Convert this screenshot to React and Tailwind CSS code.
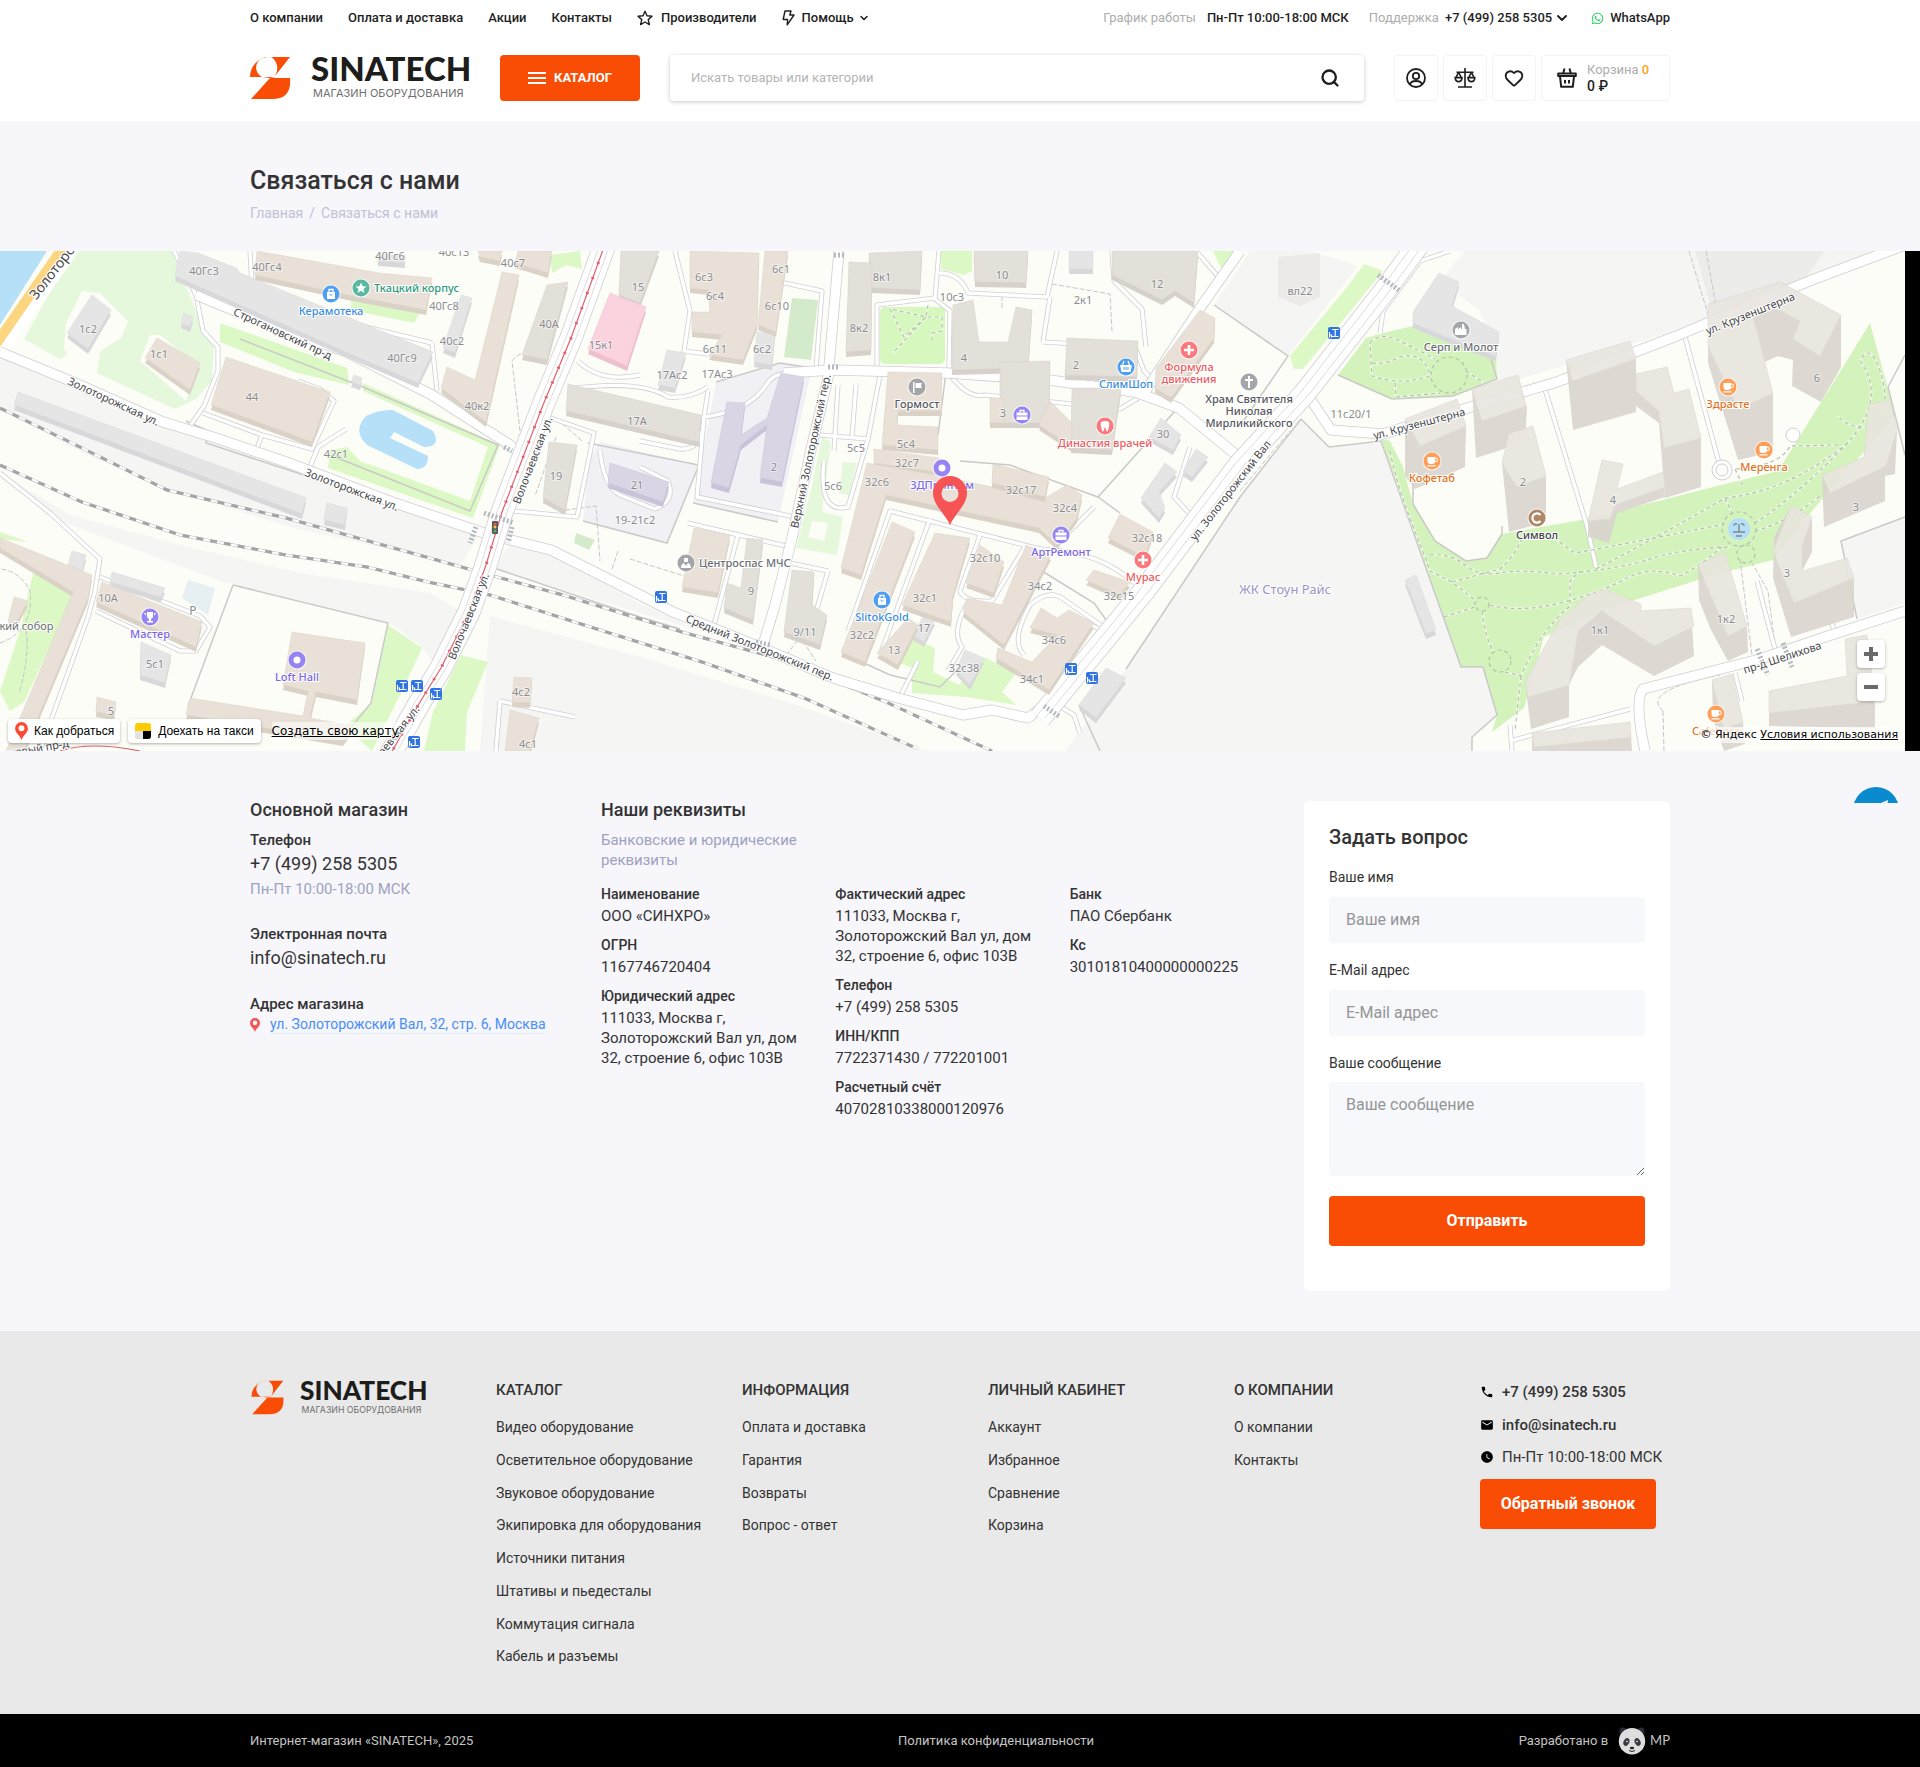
import React, { useState } from "react";
import { ChevronDown, Search, Heart, Plus, Minus } from "lucide-react";
import { FaWhatsapp } from "react-icons/fa";
import { MdPhone, MdEmail, MdWatchLater } from "react-icons/md";

const footerColumns = [
  {
    title: "КАТАЛОГ",
    links: [
      "Видео оборудование",
      "Осветительное оборудование",
      "Звуковое оборудование",
      "Экипировка для оборудования",
      "Источники питания",
      "Штативы и пьедесталы",
      "Коммутация сигнала",
      "Кабель и разъемы",
    ],
  },
  {
    title: "ИНФОРМАЦИЯ",
    links: ["Оплата и доставка", "Гарантия", "Возвраты", "Вопрос - ответ"],
  },
  {
    title: "ЛИЧНЫЙ КАБИНЕТ",
    links: ["Аккаунт", "Избранное", "Сравнение", "Корзина"],
  },
  { title: "О КОМПАНИИ", links: ["О компании", "Контакты"] },
];

const requisites = [
  [
    ["Наименование", "ООО «СИНХРО»"],
    ["ОГРН", "1167746720404"],
    ["Юридический адрес", "111033, Москва г, Золоторожский Вал ул, дом 32, строение 6, офис 103В"],
  ],
  [
    ["Фактический адрес", "111033, Москва г, Золоторожский Вал ул, дом 32, строение 6, офис 103В"],
    ["Телефон", "+7 (499) 258 5305"],
    ["ИНН/КПП", "7722371430 / 772201001"],
    ["Расчетный счёт", "40702810338000120976"],
  ],
  [
    ["Банк", "ПАО Сбербанк"],
    ["Кс", "30101810400000000225"],
  ],
];

// ---------- map data, in a 1905 x 500 space ----------

const grayZones = [
  "0,104 167,176 481,281 461,314 294,277 163,237 73,197 0,157",
  "0,227 60,270 100,285 220,330 388,371 420,394 440,420 464,362 430,342 300,322 180,294 70,264 0,222",
  "490,365 640,406 800,455 925,500 480,500",
  "512,290 560,308 640,352 700,380 640,362 494,318",
  "1465,0 1905,0 1674,80 1520,128 1497,128 1496,101 1480,60 1440,30",
  "1240,246 1301,168 1329,196 1381,190 1461,416 1483,416 1497,464 1472,486 1472,500 1065,500 1126,418",
  "1214,54 1288,105 1358,15 1310,0 1250,0",
  "1841,290 1905,266 1905,352 1857,368",
];

const lots = [
  "716,131 780,112 812,117 778,271 693,252",
  "600,191 699,214 667,292 583,270 588,210",
];

const lightGreens = [
  "73,0 172,0 196,60 214,96 212,130 196,148 175,158 97,122 103,80 60,108 24,88",
  "822,186 831,191 822,261 843,266 837,304 796,297 812,234",
  "843,211 857,212 849,244 839,242",
];

const yards = [
  "82,40 100,42 128,70 122,86 104,98 78,118 64,98 66,72",
  "150,84 160,84 200,116 186,150 140,110",
  "812,270 828,272 824,290 808,286",
];

const greens = [
  "220,72 347,117 349,134 294,121 220,91",
  "363,132 500,194 473,267 328,217 330,200 347,196 360,210 470,250 488,196 363,140",
  "351,49 420,62 414,72 351,59",
  "388,374 422,397 402,440 372,500 345,475 372,452",
  "461,404 488,411 467,461 465,500 424,500 433,461",
  "33,322 75,341 24,451 10,460 0,440 20,380",
  "0,281 28,291 0,288",
  "941,0 972,0 972,20 964,24 941,18",
  "912,387 935,397 933,421 959,434 984,406 1016,422 1002,441 1016,454 967,446 912,442 912,417 900,412",
  "550,4 580,0 582,18 566,14 552,22",
  "1213,0 1238,0 1223,21",
  "1364,13 1383,20 1303,118 1294,118 1290,105 1348,35",
];

const parks = [
  "1338,124 1366,87 1387,81 1413,75 1496,101 1497,127 1453,145 1392,148",
  "1381,188 1390,190 1403,216 1413,253 1435,290 1466,310 1487,307 1502,283 1587,268 1717,235 1778,220 1838,124 1870,72 1895,164 1864,201 1821,249 1773,309 1717,323 1622,353 1544,386 1524,457 1492,481 1497,464 1483,416 1461,416",
];

const beige = [
  "157,87 200,112 190,139 145,107",
  "226,106 330,141 312,191 211,154",
  "257,0 379,22 432,27 426,59 347,44 255,24",
  "502,21 519,24 486,171 441,137 447,116 475,129",
  "292,381 365,392 357,449 316,441 310,467 354,475 343,490 186,464 190,447 303,465 308,440 283,434",
  "102,331 202,371 196,396 96,351",
  "97,446 116,451 114,464 96,461",
  "0,287 92,324 88,347 24,500 6,500 73,341 0,297",
  "514,426 532,427 530,452 512,451",
  "510,459 539,467 530,500 505,500",
  "14,346 28,350 14,376 8,370",
  "518,0 552,0 548,22 515,12",
  "478,0 502,0 500,10 480,6",
  "690,0 759,2 757,74 743,109 709,104 722,84 692,81 692,61 710,61 709,39 690,37",
  "765,0 788,0 776,81 758,74",
  "888,121 942,122 941,141 942,160 898,160 897,174 938,176 938,199 882,194",
  "874,198 939,207 937,221 874,212",
  "867,212 935,224 1045,247 1067,234 1082,244 1077,267 1057,294 1039,277 886,244 861,324 841,317",
  "993,213 1049,226 1045,246 992,232",
  "935,282 970,287 953,344 951,371 902,354",
  "892,271 915,281 865,411 841,401",
  "908,367 918,374 898,414 877,402",
  "980,294 1004,311 994,342 966,332",
  "1026,294 1051,304 1004,394 963,361 967,347 1002,354",
  "1041,357 1057,367 1069,359 1094,372 1049,439 996,407 998,397 1032,411 1057,384 1030,377",
  "1120,263 1153,281 1145,306 1108,287",
  "1094,319 1130,331 1120,344 1086,329",
  "1039,174 1050,150 1072,172 1072,196",
  "1200,59 1215,67 1214,87 1171,147 1155,137 1156,117",
  "694,277 730,284 718,342 682,336",
  "990,147 1004,147 1004,172 990,172",
];

const stone = [
  "869,2 922,0 920,39 871,37",
  "849,11 872,12 871,99 846,101",
  "974,0 1028,0 1026,32 975,31",
  "1112,0 1198,0 1194,52 1175,40 1162,49 1112,24",
  "953,54 973,49 979,91 1008,91 1016,56 1032,59 1028,117 952,119",
  "1000,111 1050,110 1049,172 1000,172",
  "1072,137 1121,137 1112,199 1071,197",
  "1067,87 1138,90 1137,126 1065,124",
  "747,287 763,289 753,369 724,357 727,332 741,337",
  "792,319 814,321 812,354 827,364 820,394 784,381",
  "621,0 659,0 640,52 619,44",
  "568,133 701,164 699,191 566,160",
  "549,191 577,194 565,259 543,247",
  "547,34 568,31 547,109 522,104",
];

const grayHouses = [
  "92,44 111,59 88,98 67,82",
  "180,0 198,2 236,17 240,22 433,101 418,132 339,98 175,25",
  "378,4 405,4 405,12 378,10",
  "461,44 472,47 455,102 443,97",
  "18,141 306,247 302,263 14,154",
  "327,252 347,257 345,274 324,269",
  "112,321 165,337 161,346 110,331",
  "141,391 171,404 165,432 140,424",
  "72,300 86,304 82,320 68,314",
  "184,62 193,66 190,76 181,72",
  "354,124 362,127 360,134 351,131",
  "757,81 775,81 772,114 754,111",
  "667,99 686,102 675,137 658,134",
  "1069,0 1093,0 1093,18 1069,18",
  "924,364 935,369 924,391 913,384",
  "965,399 984,407 970,434 956,419",
  "1161,167 1181,184 1173,199 1149,186",
  "1165,212 1177,221 1159,241 1165,257 1159,267 1141,247",
  "1196,198 1208,206 1192,226 1183,220",
  "1126,427 1096,467 1079,454 1106,417",
  "1413,61 1439,22 1459,31 1452,55 1499,81 1496,105 1465,94 1413,72",
  "1405,329 1416,324 1436,379 1426,383",
];

const purpleHouses = [
  "781,122 804,126 782,231 760,227 767,174 741,194 729,237 711,232 727,151 745,152 741,184 767,167",
  "610,212 669,231 663,251 608,232",
];

// tall blocks: [outline, roof]
const towers = [
  ["1405,168 1457,148 1466,175 1465,216 1415,238 1405,225", "1405,168 1457,148 1466,175 1420,195"],
  ["1472,138 1518,124 1527,157 1525,190 1504,198 1476,207", "1472,138 1518,124 1526,155 1482,170"],
  ["1502,212 1509,183 1533,175 1546,225 1546,271 1509,281", "1502,212 1509,183 1533,175 1546,225 1517,236"],
  ["1566,109 1630,90 1636,109 1636,161 1573,179", "1566,109 1630,90 1636,108 1573,130"],
  ["1636,123 1667,116 1674,142 1689,138 1701,187 1701,236 1665,247 1659,172 1636,155", "1636,123 1667,116 1674,142 1689,138 1701,187 1664,197 1659,160 1636,140"],
  ["1602,209 1623,213 1617,238 1663,221 1665,246 1617,262 1609,292 1588,286 1588,270", "1602,209 1623,213 1617,238 1663,221 1665,236 1615,254 1610,268 1588,270"],
  ["1708,53 1780,31 1841,64 1841,116 1821,151 1792,135 1793,109 1778,105 1758,114 1773,142 1773,201 1738,209 1708,112", "1708,53 1780,31 1841,64 1820,105 1793,88 1800,70 1778,58 1752,62 1773,142 1738,158 1708,95"],
  ["1869,153 1890,149 1897,179 1895,223 1885,225 1885,250 1824,276 1822,224 1864,206", "1869,153 1890,149 1897,179 1886,215 1830,242 1822,224 1864,206"],
  ["1791,255 1812,266 1812,301 1802,320 1815,320 1847,307 1854,327 1854,366 1791,386 1773,327 1774,286", "1791,255 1812,266 1802,295 1802,320 1847,307 1854,327 1794,352 1773,300"],
  ["1698,314 1725,301 1747,375 1748,401 1728,410 1711,379 1699,349", "1698,314 1725,301 1747,375 1728,385 1711,345"],
  ["1604,338 1641,353 1641,360 1691,357 1694,405 1654,425 1602,394 1578,416 1569,434 1569,466 1531,478 1525,431 1559,370 1587,345", "1604,338 1641,353 1641,360 1691,357 1694,375 1654,395 1602,360 1578,380 1569,434 1528,446 1525,431 1559,370 1587,345"],
  ["1769,440 1847,425 1845,388 1867,384 1875,453 1875,477 1769,475", "1769,440 1847,425 1845,388 1867,384 1875,450 1769,462"],
  ["1712,429 1732,423 1743,471 1745,493 1724,500 1713,468", "1712,429 1732,423 1743,471 1724,478"],
  ["1532,482 1630,471 1632,500 1532,500", "1532,482 1630,471 1631,486 1534,496"],
];

const minorRoads = [
  "M174,0 L196,44 L203,80 L218,96 L218,120 L204,155 L190,175",
  "M250,0 L252,36 L300,60 L432,92",
  "M432,92 L437,140",
  "M0,222 L50,262 L100,308 L95,340 L88,366 L40,500",
  "M96,360 L180,400 L196,400 L210,376 L200,365 L100,326",
  "M203,162 L262,184 L312,198 L334,150 L320,138 L298,130",
  "M262,184 L256,200",
  "M318,196 L310,216",
  "M318,196 L346,178",
  "M548,166 L594,182 L577,266 L514,260",
  "M578,110 Q600,132 640,124",
  "M568,138 Q640,128 668,146 Q690,148 708,136",
  "M640,190 L680,198 Q700,200 704,172",
  "M600,200 Q604,236 620,244 L655,258 Q676,250 668,230 L640,216",
  "M704,166 L697,246 L795,266",
  "M708,140 L704,166 Q750,160 766,134 Q776,118 800,124",
  "M675,0 L690,60 L684,100 L716,104",
  "M780,31 L822,40 L816,118",
  "M820,184 L868,188 L880,124",
  "M838,134 L834,200",
  "M856,134 L852,186",
  "M868,188 L848,256 Q818,264 824,210",
  "M688,272 L790,296",
  "M738,284 L714,374",
  "M790,312 L828,320",
  "M828,320 L815,364",
  "M848,380 L890,260 L1040,298",
  "M930,268 L880,404",
  "M980,284 L960,340 Q965,352 992,350 L1026,294",
  "M970,348 Q950,380 962,396 L948,420",
  "M1040,298 Q1100,300 1134,332",
  "M1058,292 L1094,256",
  "M877,117 L877,54 L935,47 L939,0",
  "M949,117 L950,60 L935,48",
  "M939,22 Q960,22 968,42 L1047,46 L1057,0",
  "M1043,91 L1050,46",
  "M1043,91 L1135,96 L1144,120 L1156,132",
  "M950,124 Q968,148 985,144 L1120,158 L1140,146",
  "M1112,0 L1114,30 L1142,58 L1146,96",
  "M1196,0 L1222,30",
  "M1190,196 L1174,246 L1196,270",
  "M1048,448 L1074,464 L1080,482",
  "M1080,370 L1110,382",
  "M1024,404 Q1010,390 1030,354 Q1050,336 1066,350 L1112,382",
  "M900,446 L918,410",
  "M500,450 L575,466",
  "M500,450 L496,500",
  "M1544,135 L1587,275 L1596,316",
  "M1685,86 L1719,212",
  "M1380,82 L1383,60 L1420,10 L1450,0",
  "M1630,458 L1510,490",
  "M1510,474 L1512,500",
  "M1735,422 L1742,450",
  "M1757,330 L1776,402",
  "M1835,384 L1832,372",
];

const mainRoads = [
  "M0,101 L73,131 L163,171 L216,187 L286,211 L392,251 L490,284 L551,299 L640,344 L673,361 L755,394 L833,427 L898,447 L963,464 L992,459 L1028,467 L1049,451",
  "M196,44 L245,64 L347,101 L432,144 L510,194 L526,207",
  "M839,0 L828,127 L812,194 L792,287 L775,354 L763,394",
  "M784,122 L833,119 L947,122 L1049,129 L1135,141 L1179,157 L1240,207",
  "M1143,144 L1200,57 L1240,0",
  "M1309,146 L1331,179 L1383,183 L1457,160 L1557,131 L1674,86 L1760,50 L1817,27 L1905,-6",
  "M1905,360 L1825,386 L1760,408 L1643,438 Q1634,450 1645,500",
];

const avenues = [
  "M604,-4 L571,87 L543,154 L502,261 L486,314 L469,361 L441,417 L420,451 L390,504",
  "M1040,467 L1143,341 L1240,213 L1305,142 L1383,42 L1418,-6",
];

const fences = [
  "M233,334 L388,372 L371,452 L350,478",
  "M233,334 L188,455",
  "M240,88 L363,136 L498,194 L470,260 L335,206",
  "M716,131 L780,112 L812,117 M693,252 L778,271 M588,192 L699,214 L667,292 L583,270",
  "M946,121 L938,184 M1175,160 L1098,246 L1010,214 L960,210",
  "M1098,246 L1120,262 M1042,320 L1094,352 L1114,380 M864,412 L890,424 L940,436 L956,420",
  "M1214,54 L1288,105 L1240,175 M1301,168 L1329,196 L1381,190 L1461,416 L1483,416 L1497,464 L1472,486 L1472,500",
  "M1338,124 L1392,148 L1453,145 L1497,128 L1490,104",
  "M1413,220 L1413,253 L1435,290 L1466,310 L1487,307 L1502,283 L1502,275",
  "M1126,418 L1240,246 L1301,168 M1079,454 L1100,500",
  "M1857,368 L1841,290 L1905,266 M1888,136 L1905,104 M1888,136 L1905,204",
  "M186,170 L208,180 L206,192 L310,226",
  "M497,318 L640,366 L680,378",
];

const parkPaths = [
  "M1390,200 C1400,250 1420,290 1430,320 L1452,331 L1476,350",
  "M1444,366 L1475,356",
  "M1490,354 Q1520,362 1560,352 T1625,328 T1680,325 Q1700,315 1722,296",
  "M1430,304 Q1450,302 1465,314 T1500,322 T1560,323 Q1620,318 1650,308 T1730,296",
  "M1452,331 L1500,318 Q1515,305 1523,285",
  "M1554,287 L1575,302 Q1640,290 1725,273",
  "M1596,318 Q1660,285 1725,247 Q1790,240 1850,190",
  "M1755,272 Q1790,250 1840,200 T1860,110 Q1870,90 1880,120 T1880,175 Q1850,180 1838,165",
  "M1755,280 Q1790,270 1820,245",
  "M1725,247 L1732,262",
  "M1735,218 L1743,235",
  "M1838,194 L1790,195 Q1780,215 1735,218",
  "M1482,360 Q1485,385 1493,400",
  "M1505,421 L1521,425 Q1540,380 1570,355 L1570,330 L1580,320",
  "M1521,425 L1515,480",
  "M1370,92 Q1380,80 1400,90 T1435,108",
  "M1372,112 Q1385,114 1400,106 Q1425,100 1430,125 Q1400,135 1372,125 L1370,92",
  "M1395,132 L1396,146 Q1420,144 1440,142",
  "M1466,120 L1484,132",
  "M890,58 L904,86 L926,66 L890,58 M926,66 L893,102 M928,54 L926,66 L942,66 L942,80 L932,82 L932,90",
];

const thinPaths = [
  "M520,180 L512,110 Q522,98 530,104",
  "M582,190 Q560,170 552,166 M556,186 L535,245 M558,260 L596,255 L600,310",
  "M1052,33 L1110,43 L1112,80 M1002,45 L1002,58",
  "M630,308 L700,330 M618,300 L612,318",
  "M1689,0 L1710,70 M1706,0 L1716,54",
  "M1776,402 L1768,340 L1752,312 M1740,308 L1752,404",
  "M1240,240 L1290,180 M1060,440 L1150,322",
  "M1663,460 Q1640,440 1720,424 M1663,460 L1664,500",
  "M782,410 L800,386 L816,410",
  "M0,392 Q34,380 30,340 Q20,320 0,318",
  "M20,440 Q30,400 26,380",
];

const houseNumbers = [
  ["40Гс3", 204, 20], ["40Гс4", 267, 16], ["40Гс6", 390, 5], ["40с13", 454, 1], ["40с7", 513, 12],
  ["40Гс8", 444, 55], ["40с2", 452, 90], ["40А", 549, 73], ["1с2", 88, 78], ["1с1", 159, 103],
  ["44", 252, 146], ["40Гс9", 402, 107], ["40к2", 477, 155], ["42с1", 336, 203], ["19", 556, 225],
  ["15к1", 601, 94], ["10А", 108, 347], ["5с1", 155, 413], ["5", 111, 460], ["4с2", 521, 441],
  ["4с1", 528, 493], ["15", 638, 36], ["6с3", 704, 26], ["6с1", 781, 18], ["6с4", 715, 45],
  ["6с10", 777, 55], ["6с11", 715, 98], ["6с2", 762, 98], ["17Ас2", 672, 124], ["17Ас3", 717, 123],
  ["17А", 637, 170], ["21", 637, 234], ["19-21с2", 635, 269], ["2", 774, 216], ["8к1", 882, 26],
  ["8к2", 859, 77], ["10", 1002, 24], ["10с3", 952, 46], ["2к1", 1083, 49], ["12", 1157, 33],
  ["4", 964, 107], ["2", 1076, 114], ["3", 1003, 162], ["5с4", 906, 193], ["5с5", 856, 197],
  ["32с7", 907, 212], ["5с6", 833, 235], ["32с6", 877, 231], ["32с17", 1021, 239], ["32с4", 1065, 257],
  ["30", 1163, 183], ["32с18", 1147, 287], ["32с10", 985, 307], ["34с2", 1040, 335], ["32с15", 1119, 345],
  ["32с1", 925, 347], ["17", 924, 377], ["32с2", 862, 384], ["13", 894, 399], ["34с6", 1054, 389],
  ["32с38", 964, 417], ["34с1", 1032, 428], ["9", 751, 340], ["9/11", 805, 381], ["вл22", 1300, 40],
  ["11с20/1", 1351, 163], ["2", 1523, 231], ["4", 1613, 249], ["6", 1817, 127], ["3", 1856, 256],
  ["3", 1787, 322], ["1к2", 1726, 368], ["1к1", 1600, 379],
];

// [text, centre x, centre y, angle]
const streets = [
  ["Строгановский пр-д", 283, 82, 25],
  ["Золоторожская ул.", 114, 150, 25],
  ["Золоторожская ул.", 352, 238, 21],
  ["Волочаевская ул.", 532, 209, -69],
  ["Волочаевская ул.", 468, 365, -68],
  ["Волочаевская ул.", 388, 492, -52],
  ["Верхний Золоторожский пер.", 810, 200, -78],
  ["Средний Золоторожский пер.", 760, 396, 22],
  ["ул. Золоторожский Вал", 1230, 239, -52],
  ["ул. Крузенштерна", 1419, 172, -15],
  ["ул. Крузенштерна", 1750, 62, -22],
  ["пр-д Шелихова", 1782, 406, -18],
  ["Танковый пр-д", 30, 498, -10],
];

const BLUE = "#4f9ff0";
const RED = "#f9797d";
const PURPLE = "#9683f4";
const GRAY = "#a3a5a9";
const ORANGE = "#ff9f57";

const places = [
  { x: 331, y: 43, fill: BLUE, ink: "#3a8de0", icon: "bag", lines: ["Керамотека"] },
  { x: 361, y: 37, fill: "#57b99d", ink: "#2f9a7d", icon: "star", lines: ["Ткацкий корпус"], side: true },
  { x: 150, y: 366, fill: PURPLE, ink: "#7a66e6", icon: "cup", lines: ["Мастер"] },
  { x: 297, y: 409, fill: PURPLE, ink: "#7a66e6", icon: "dot", lines: ["Loft Hall"] },
  { x: 917, y: 136, fill: GRAY, ink: "#55585d", icon: "flag", lines: ["Гормост"] },
  { x: 1126, y: 116, fill: BLUE, ink: "#3a8de0", icon: "basket", lines: ["СлимШоп"] },
  { x: 1189, y: 99, fill: RED, ink: "#ee5b60", icon: "plus", lines: ["Формула", "движения"] },
  { x: 1022, y: 164, fill: PURPLE, ink: "#7a66e6", icon: "case", lines: [] },
  { x: 1105, y: 175, fill: RED, ink: "#ee5b60", icon: "tooth", lines: ["Династия врачей"] },
  { x: 1249, y: 131, fill: GRAY, ink: "#55585d", icon: "cross", lines: ["Храм Святителя", "Николая", "Мирликийского"] },
  { x: 942, y: 217, fill: PURPLE, ink: "#7a66e6", icon: "dot", lines: ["3ДПринтом"] },
  { x: 1061, y: 284, fill: PURPLE, ink: "#7a66e6", icon: "case", lines: ["АртРемонт"] },
  { x: 1143, y: 309, fill: RED, ink: "#ee5b60", icon: "plus", lines: ["Мурас"] },
  { x: 882, y: 349, fill: BLUE, ink: "#3a8de0", icon: "bag", lines: ["SlitokGold"] },
  { x: 686, y: 312, fill: GRAY, ink: "#6b6e73", icon: "people", lines: ["Центроспас МЧС"], side: true },
  { x: 1461, y: 79, fill: GRAY, ink: "#6b6e73", icon: "factory", lines: ["Серп и Молот"] },
  { x: 1432, y: 210, fill: ORANGE, ink: "#e0731d", icon: "coffee", lines: ["Кофетаб"] },
  { x: 1728, y: 136, fill: ORANGE, ink: "#e0731d", icon: "coffee", lines: ["Здрасте"] },
  { x: 1764, y: 199, fill: ORANGE, ink: "#e0731d", icon: "coffee", lines: ["Меренга"] },
  { x: 1537, y: 267, fill: "#b08664", ink: "#3f4247", icon: "ring", lines: ["Символ"] },
  { x: 1716, y: 463, fill: ORANGE, ink: "#e0731d", icon: "coffee", lines: ["Cafehora"] },
];

const glyphs = {
  dot: <circle r="3.5" fill="#fff" />,
  plus: <path d="M0,-5V5M-5,0H5" stroke="#fff" strokeWidth="2.6" />,
  cross: <path d="M0,-6V6M-4,-2H4" stroke="#fff" strokeWidth="2" />,
  star: <path d="M0,-5.5L1.6,-1.8L5.5,-1.6L2.5,1L3.5,5L0,2.8L-3.5,5L-2.5,1L-5.5,-1.6L-1.6,-1.8Z" fill="#fff" />,
  bag: (
    <g>
      <path d="M-4,-2H4V5H-4Z" fill="#fff" />
      <path d="M-2,-2V-4.5H2V-2" stroke="#fff" strokeWidth="1.3" fill="none" />
      <path d="M-1.6,0Q0,3 1.6,0" stroke={BLUE} fill="none" />
    </g>
  ),
  basket: (
    <g>
      <path d="M-6,-2H6L4.5,5H-4.5Z" fill="#fff" />
      <path d="M-3.5,-2L-2,-6M3.5,-2L2,-6" stroke="#fff" strokeWidth="1.2" />
      <path d="M-2,0V3M0,0V3M2,0V3" stroke={BLUE} />
    </g>
  ),
  cup: <path d="M-3,-5H3V-1A3,3 0 0 1 -3,-1ZM-1,2H1V4H3V5.5H-3V4H-1ZM-6,-4H-4V-1ZM6,-4H4V-1Z" fill="#fff" />,
  flag: <path d="M-4,-5H-2.5V6H-4ZM-1.5,-4H5L4,-1.5L5,1H-1.5Z" fill="#fff" />,
  case: (
    <g>
      <path d="M-5.5,-2.5H5.5V0.5H-5.5ZM-5.5,1.5H5.5V5H-5.5Z" fill="#fff" />
      <path d="M-2,-2.5V-4.5H2V-2.5" stroke="#fff" strokeWidth="1.3" fill="none" />
    </g>
  ),
  tooth: <path d="M-4,-4Q0,-6 4,-4Q5,0 2.5,5.5Q1,6 0.5,1.5H-0.5Q-1,6 -2.5,5.5Q-5,0 -4,-4Z" fill="#fff" />,
  people: <path d="M-2,-5H2V-1H-2ZM-5,5Q-5,1 -2,0L0,3L2,0Q5,1 5,5Z" fill="#fff" />,
  factory: <path d="M-6,5V-1L-3,-3V-1L0,-3V-1H1V-6H3L4,-1H5.5V5Z" fill="#fff" />,
  coffee: (
    <g>
      <path d="M-4.5,-4H3V0Q3,3 0,3H-1.5Q-4.5,3 -4.5,0ZM-4.5,4.2H3.5V5.5H-4.5Z" fill="#fff" />
      <circle cx="3.5" cy="-1.2" r="1.8" stroke="#fff" strokeWidth="1.1" fill="none" />
    </g>
  ),
  ring: <path d="M3.5,-3A4.6,4.6 0 1 0 3.5,3" stroke="#fff" strokeWidth="2.2" fill="none" />,
};

const stops = [
  [402, 435], [417, 435], [436, 443], [414, 491], [661, 346], [1071, 418], [1092, 427], [1334, 82],
];

const Blocks = ({ shapes, roof, wall }) => (
  <g>
    {shapes.map((points) => (
      <g key={points}>
        <polygon points={points} fill={wall} transform="translate(0 5)" />
        <polygon points={points} fill={roof} stroke={wall} strokeWidth="0.5" />
      </g>
    ))}
  </g>
);

const Areas = ({ shapes, fill }) => (
  <g fill={fill}>
    {shapes.map((points) => (
      <polygon key={points} points={points} />
    ))}
  </g>
);

const Roads = ({ paths, width, edge }) => (
  <g fill="none" strokeLinejoin="round">
    {paths.map((d) => (
      <path key={`e${d}`} d={d} stroke={edge} strokeWidth={width} />
    ))}
    {paths.map((d) => (
      <path key={d} d={d} stroke="#ffffff" strokeWidth={width - 1.6} />
    ))}
  </g>
);

const railA = "M0,157 L82,197 L167,239 L286,267 L408,301 L490,324 L563,344 L682,381 L784,409 L886,451 L992,500";
const railB = "M0,214 L82,251 L180,284 L286,304 L367,316 L428,331 L490,344 L600,379 L702,411 L804,447 L918,498";

const CityMap = () => (
  <svg
    viewBox="0 0 1905 500"
    preserveAspectRatio="xMidYMid slice"
    className="block h-full w-full font-['Noto_Sans',sans-serif]"
    role="img"
    aria-label="Карта проезда"
  >
    <rect width="1905" height="500" fill="#fcfdf7" />
    <Areas shapes={grayZones} fill="#f5f5f4" />
    <Areas shapes={lots} fill="#f1f0f5" />
    <Areas shapes={lightGreens} fill="#e5f8dc" />
    <Areas shapes={yards} fill="#fcfdf7" />
    <Areas shapes={greens} fill="#dbf8c5" />
    <Areas shapes={parks} fill="#d4f3bc" />
    <rect x="880" y="56" width="65" height="57" rx="5" fill="#d6f7bd" />
    <polygon points="792,47 818,49 811,109 784,106" fill="#d3eacb" />
    <polygon points="576,282 595,289 589,299 574,292" fill="#d3eacb" />
    <polygon points="188,329 215,337 208,364 182,347" fill="#e6f0f3" />
    <polygon points="0,0 47,0 0,74" fill="#b6e0f8" />
    <polygon points="1695,0 1825,0 1800,35 1710,53" fill="#ececea" />
    <path
      d="M393,159 L433,180 Q442,196 424,196 L394,181 L390,187 L428,205 Q428,218 417,218 L367,194 Q352,180 366,165 Q380,158 393,159Z"
      fill="#b6e0f8"
    />

    <g fill="none" stroke="#c6c6ca" strokeWidth="1">
      {thinPaths.map((d) => (
        <path key={d} d={d} strokeDasharray="5 2" />
      ))}
    </g>
    <g fill="none" stroke="#cbc9c8" strokeWidth="1.5">
      {fences.map((d) => (
        <path key={d} d={d} />
      ))}
    </g>

    {/* railway */}
    {[railA, railB].map((d) => (
      <g key={d} fill="none">
        <path d={d} stroke="#b5b7b7" strokeWidth="3" />
        <path d={d} stroke="#ffffff" strokeWidth="2" />
        <path d={d} stroke="#a2a5a5" strokeWidth="3" strokeDasharray="7 7" />
      </g>
    ))}

    <Roads paths={minorRoads} width={5} edge="#d0d0d4" />
    <Roads paths={mainRoads} width={11} edge="#cfcfd3" />
    <Roads paths={avenues} width={23} edge="#cfcfd3" />
    <g fill="none" stroke="#d3d3d6" strokeWidth="0.8">
      {avenues.map((d) => (
        <path key={d} d={d} transform="translate(-5 0)" />
      ))}
      {avenues.map((d) => (
        <path key={`r${d}`} d={d} transform="translate(5 0)" />
      ))}
    </g>
    <path d="M76,-8 L6,92" stroke="#fff" strokeWidth="14" />
    <path d="M66,-8 L-6,96" stroke="#fbd580" strokeWidth="10" />
    <path d={avenues[0]} fill="none" stroke="#e0606b" strokeWidth="1.2" />
    <path d={avenues[0]} fill="none" stroke="#e0606b" strokeWidth="3" strokeDasharray="2 14" />
    <path d="M60,500 Q90,490 140,500" fill="none" stroke="#e0606b" strokeWidth="1.2" />
    <g fill="#fff" stroke="#d0d0d4">
      <circle cx="1722" cy="219" r="10" />
      <circle cx="1722" cy="219" r="6" fill="#fcfdf7" />
      <circle cx="1793" cy="184" r="7" />
    </g>

    <g fill="none" stroke="#ffffff" strokeWidth="2.6" opacity="0.5">
      {parkPaths.map((d) => (
        <path key={d} d={d} />
      ))}
    </g>
    <g fill="none" stroke="#b3c3a9" strokeWidth="1.2" strokeDasharray="4 3">
      {parkPaths.map((d) => (
        <path key={d} d={d} />
      ))}
      <circle cx="1482" cy="353" r="7" />
      <circle cx="1500" cy="410" r="11" />
      <circle cx="1739" cy="278" r="17" />
      <circle cx="1746" cy="303" r="9" />
      <circle cx="1449" cy="124" r="18" />
    </g>
    <circle cx="1739" cy="278" r="11" fill="#b6e0f8" />
    <path d="M1734,275 Q1734,272 1737,273 M1744,275 Q1744,272 1741,273 M1739,273 V281 M1733,281 H1745 M1736,285 H1742" stroke="#7f868c" strokeWidth="1.4" fill="none" />

    <Blocks shapes={grayHouses} roof="#e5e5e6" wall="#d8d8da" />
    <Blocks shapes={stone} roof="#e3dfd9" wall="#d6d1cb" />
    <Blocks shapes={beige} roof="#e9e1d8" wall="#dbd2c7" />
    <Blocks shapes={purpleHouses} roof="#d9d5e5" wall="#c8c3d8" />
    <Blocks shapes={["610,42 646,56 627,115 588,98"]} roof="#fad3df" wall="#eebfcd" />
    <polygon points="1278,6 1320,2 1320,46 1300,55 1278,46" fill="#ebeae8" />
    <g opacity="0.9">
      {towers.map(([outline, roof]) => (
        <g key={outline}>
          <polygon points={outline} fill="#dad5cf" />
          <polygon points={roof} fill="#e9e5df" stroke="#dfdad4" strokeWidth="0.6" />
        </g>
      ))}
    </g>

    {/* crossings and lights */}
    <g stroke="#b4bac0" strokeWidth="5" strokeDasharray="2 2">
      <path d="M484,262 L514,272" />
      <path d="M476,276 L470,292" />
      <path d="M512,276 L508,292" />
      <path d="M834,4 L844,4" />
      <path d="M828,116 L838,116" />
      <path d="M756,391 L770,394" />
      <path d="M1044,455 L1060,466" />
      <path d="M1378,24 L1400,40" />
      <path d="M1757,398 L1768,424" />
      <path d="M1783,392 L1792,416" />
      <path d="M504,196 L512,200" />
    </g>
    <rect x="492" y="270" width="6" height="13" rx="1" fill="#555a60" />
    <circle cx="495" cy="273" r="1.5" fill="#e9574c" />
    <circle cx="495" cy="276" r="1.5" fill="#f2c641" />
    <circle cx="495" cy="280" r="1.5" fill="#4db35a" />

    <g fontSize="11" fill="#8b8b90" textAnchor="middle" dominantBaseline="central">
      {houseNumbers.map(([text, x, y]) => (
        <text key={`${text}-${x}`} x={x} y={y - 1} stroke="#fff" strokeOpacity="0.5" strokeWidth="2" paintOrder="stroke">
          {text}
        </text>
      ))}
    </g>

    <g fontSize="11" fill="#45464a" textAnchor="middle" dominantBaseline="central" stroke="#fff" strokeWidth="2" paintOrder="stroke">
      {streets.map(([text, x, y, angle]) => (
        <text key={`${text}-${x}`} transform={`translate(${x} ${y}) rotate(${angle})`}>
          {text}
        </text>
      ))}
      <text textAnchor="start" fontSize="14" transform="translate(32 46) rotate(-52)">
        Золоторожская наб.
      </text>
      <text x="-6" y="374" textAnchor="start" fill="#6b6e73">ский собор</text>
      <text x="193" y="359" fontSize="12" fill="#8b8b90">P</text>
      <text x="1285" y="338" fontSize="13" fill="#9a93c8">ЖК Стоун Райс</text>
    </g>

    {stops.map(([x, y]) => (
      <g key={`${x}-${y}`} transform={`translate(${x} ${y})`}>
        <rect x="-6" y="-6" width="12" height="12" rx="2" fill="#2f74e0" />
        <path d="M-2,-3.5H4.5M1.2,-3.5V3.5M-2,3.5H4.5M-4.5,-1V4.5M-4.5,2H-2.5V4.5" stroke="#fff" strokeWidth="1.2" fill="none" />
      </g>
    ))}

    {places.map((p) => (
      <g key={`${p.x}-${p.y}`} transform={`translate(${p.x} ${p.y})`}>
        <circle r="9.5" fill="#fff" opacity="0.8" />
        <circle r="8.5" fill={p.fill} />
        {glyphs[p.icon]}
        {p.lines.map((line, i) => (
          <text
            key={line}
            x={p.side ? 13 : 0}
            y={p.side ? -1 : 16 + i * 12}
            fontSize="11"
            fontWeight="500"
            fill={p.ink}
            stroke="#fff"
            strokeWidth="2"
            paintOrder="stroke"
            dominantBaseline="central"
            textAnchor={p.side ? "start" : "middle"}
          >
            {line}
          </text>
        ))}
      </g>
    ))}

    {/* shop marker */}
    <path
      d="M950,274 C946,264 933,254 933,242 A17,17 0 0 1 967,242 C967,254 954,264 950,274Z M950,234 A8.5,8.5 0 1 0 950,251 A8.5,8.5 0 1 0 950,234Z"
      fill="#f65454"
      fillRule="evenodd"
    />
  </svg>
);

const Logo = ({ className }) => (
  <svg viewBox="0 0 220 44" className={className} role="img" aria-label="SINATECH">
    <g fill="#f94d05">
      <path d="M20,1 A20,20 0 0 0 0,21 H12 A10.5,10.5 0 0 1 10,3.4 Q14,1 20,1Z" />
      <path d="M21,1 H40 L25,20 Q28,15 27,9 Q25,3 21,1Z" />
      <path d="M20,22 H40 Q42,43 22,43 H1Z" />
      <path d="M12,21 H26 L20,22Z" />
    </g>
    <text x="61" y="25" fontFamily="Lato, sans-serif" fontWeight="900" fontSize="33" fill="#1d1d1b">
      SINATECH
    </text>
    <text x="63" y="41" fontFamily="Inter, sans-serif" fontSize="11" fill="#6f6f6e">
      МАГАЗИН ОБОРУДОВАНИЯ
    </text>
  </svg>
);

const StarIcon = () => (
  <svg viewBox="0 0 16 16" className="h-4 w-4" fill="none" stroke="#1f1f1f" strokeWidth="1.4" strokeLinejoin="round">
    <path d="M8,1.2 L10,5.8 L15,6.3 L11.2,9.6 L12.4,14.6 L8,12 L3.6,14.6 L4.8,9.6 L1,6.3 L6,5.8Z" />
  </svg>
);

const BoltIcon = () => (
  <svg viewBox="0 0 13 16" className="h-4 w-[13px]" fill="none" stroke="#1f1f1f" strokeWidth="1.4" strokeLinejoin="round">
    <path d="M3,1 H9 L7.8,5 H12 L5.2,14.8 L5.6,9.5 H1.2Z" />
  </svg>
);

const UserIcon = () => (
  <svg viewBox="0 0 20 20" className="h-5 w-5" fill="none" stroke="#1f1f1f" strokeWidth="1.8">
    <circle cx="10" cy="10" r="9" />
    <circle cx="10" cy="8" r="3.2" />
    <path d="M4,16.5 C5,11.8 15,11.8 16,16.5" />
  </svg>
);

const ScaleIcon = () => (
  <svg viewBox="0 0 22 20" className="h-5 w-[22px]" fill="none" stroke="#1f1f1f" strokeWidth="1.6">
    <path d="M11,0 V19 M4,19 H18 M2.5,4.2 H19.5 M4.6,4.2 L1.8,10 M4.6,4.2 L7.4,10 M17.4,4.2 L14.6,10 M17.4,4.2 L20.2,10" />
    <path d="M1.2,9.6 H8 Q7.8,13.6 4.6,13.6 Q1.4,13.6 1.2,9.6Z M14,9.6 H20.8 Q20.6,13.6 17.4,13.6 Q14.2,13.6 14,9.6Z" />
  </svg>
);

const BasketIcon = () => (
  <svg viewBox="0 0 20 20" className="h-5 w-5" fill="none" stroke="#1f1f1f" strokeWidth="2" strokeLinejoin="round">
    <path d="M1.2,5.4 H18.8 V8 H1.2Z M3,8.5 L4.2,18.8 H15.8 L17,8.5 M8,12 V15.5 M12,12 V15.5 M7.5,0.5 L6.3,5 M12.5,0.5 L13.7,5" />
  </svg>
);

const PinIcon = ({ className }) => (
  <svg viewBox="0 0 10 14" className={className}>
    <path
      d="M5,0 A5,5 0 0 1 10,5 C10,8.5 6,10.5 5,14 C4,10.5 0,8.5 0,5 A5,5 0 0 1 5,0Z M5,2.6 A2.3,2.3 0 1 0 5,7.2 A2.3,2.3 0 1 0 5,2.6Z"
      fill="currentColor"
      fillRule="evenodd"
    />
  </svg>
);

const PandaIcon = () => (
  <svg viewBox="0 0 28 28" className="h-7 w-7">
    <circle cx="5" cy="4" r="3.6" fill="#2c2c38" />
    <circle cx="23" cy="4" r="3.6" fill="#2c2c38" />
    <ellipse cx="14" cy="14.2" rx="13.2" ry="13.2" fill="#dedede" />
    <ellipse cx="8.4" cy="15" rx="2.8" ry="4" fill="#3a3a42" transform="rotate(25 8.4 15)" />
    <ellipse cx="19.6" cy="15" rx="2.8" ry="4" fill="#3a3a42" transform="rotate(-25 19.6 15)" />
    <circle cx="9" cy="14.5" r="0.8" fill="#fff" />
    <circle cx="19" cy="14.5" r="0.8" fill="#fff" />
    <ellipse cx="14" cy="21" rx="2.2" ry="1.3" fill="#25252b" />
    <path d="M11,23.6 Q14,25.4 17,23.6" stroke="#25252b" fill="none" />
  </svg>
);

const Header = () => {
  const [query, setQuery] = useState("");

  return (
    <header className="bg-white pb-5">
      <div className="mx-auto max-w-[1460px] px-5">
        <div className="flex h-9 items-center justify-between text-[13px] font-medium text-[#1f1f1f]">
          <nav className="flex items-center gap-[25px]">
            <a href="#about">О компании</a>
            <a href="#delivery">Оплата и доставка</a>
            <a href="#sales">Акции</a>
            <a href="#contacts">Контакты</a>
            <a href="#brands" className="flex items-center gap-2">
              <StarIcon />
              Производители
            </a>
            <a href="#help" className="flex items-center gap-[7px]">
              <BoltIcon />
              <span className="flex items-center gap-1">
                Помощь
                <ChevronDown size={12} strokeWidth={3} />
              </span>
            </a>
          </nav>
          <div className="flex items-center">
            <span className="mr-[11px] font-normal text-[#adadad]">График работы</span>
            <span className="mr-5">Пн-Пт 10:00-18:00 МСК</span>
            <span className="mr-1.5 font-normal text-[#adadad]">Поддержка</span>
            <a href="tel:+74992585305" className="mr-[21px] flex items-center gap-0.5">
              +7 (499) 258 5305
              <ChevronDown size={16} strokeWidth={2.8} />
            </a>
            <a href="#whatsapp" className="flex items-center gap-1.5">
              <FaWhatsapp size={13} color="#2bd265" />
              WhatsApp
            </a>
          </div>
        </div>

        <div className="mt-[19px] flex items-center gap-[30px]">
          <a href="#home" className="shrink-0">
            <Logo className="h-11 w-[220px] overflow-visible" />
          </a>
          <button className="flex h-[46px] w-[140px] shrink-0 items-center justify-center gap-2 rounded bg-[#f94d05] text-[13px] font-bold text-white">
            <svg viewBox="0 0 18 12" className="h-3 w-[18px]" stroke="#fff" strokeWidth="2">
              <path d="M0,1H18M0,6H18M0,11H18" />
            </svg>
            КАТАЛОГ
          </button>
          <form className="flex h-[46px] flex-1 items-center rounded bg-white pr-6 pl-[21px] shadow-[0_1px_4px_rgba(0,0,0,0.22)]">
            <input
              type="search"
              aria-label="Поиск"
              value={query}
              onChange={(e) => setQuery(e.target.value)}
              placeholder="Искать товары или категории"
              className="flex-1 bg-transparent text-[13px] outline-none placeholder:text-[#b5b5b5]"
            />
            <button type="button" aria-label="Найти">
              <Search size={20} strokeWidth={2.8} color="#1f1f1f" />
            </button>
          </form>
          <div className="flex shrink-0 gap-[5px]">
            <button aria-label="Аккаунт" className="flex h-[46px] w-11 items-center justify-center rounded border border-[#f3f3f3]">
              <UserIcon />
            </button>
            <button aria-label="Сравнение" className="flex h-[46px] w-11 items-center justify-center rounded border border-[#f3f3f3]">
              <ScaleIcon />
            </button>
            <button aria-label="Избранное" className="flex h-[46px] w-11 items-center justify-center rounded border border-[#f3f3f3]">
              <Heart size={20} strokeWidth={2.2} color="#1f1f1f" />
            </button>
            <button className="flex h-[46px] w-[129px] items-center gap-2.5 rounded border border-[#f3f3f3] pl-[15px] text-left text-[13px] leading-4">
              <BasketIcon />
              <span>
                <span className="block text-[#adadad]">
                  Корзина <span className="font-medium text-[#ffa21c]">0</span>
                </span>
                <span className="block text-[14px] font-medium text-[#1f1f1f]">0 ₽</span>
              </span>
            </button>
          </div>
        </div>
      </div>
    </header>
  );
};

const MapSection = () => (
  <section className="flex h-[500px] bg-black">
    <div className="relative min-w-0 flex-1 overflow-hidden">
      <CityMap />
      <div className="absolute bottom-2 left-2 flex items-center gap-2 font-['Liberation_Sans',sans-serif] text-[12px] text-black">
        <button className="flex h-6 items-center gap-[5px] rounded-sm bg-white px-1.5 shadow-[0_1px_3px_rgba(0,0,0,0.3)]">
          <PinIcon className="h-[18px] w-[15px] text-[#fb4934]" />
          Как добраться
        </button>
        <button className="flex h-6 items-center gap-[7px] rounded-sm bg-white px-[7px] shadow-[0_1px_3px_rgba(0,0,0,0.3)]">
          <svg viewBox="0 0 16 16" className="h-4 w-4">
            <rect width="16" height="16" rx="3" fill="#ffcc00" />
            <path d="M0,8H8V16H3Q0,16 0,13Z" fill="#e3e3e3" />
            <path d="M8,8H16V13Q16,16 13,16H8Z" fill="#000" />
          </svg>
          Доехать на такси
        </button>
        <a href="#map" className="ml-[3px] bg-white/60 font-['DejaVu_Sans',sans-serif] text-[12px] underline">
          Создать свою карту
        </a>
      </div>
      <div className="absolute right-5 bottom-[50px] flex flex-col gap-[5px]">
        <button aria-label="Приблизить" className="flex h-7 w-7 items-center justify-center rounded-sm bg-white shadow-[0_1px_3px_rgba(0,0,0,0.3)]">
          <Plus size={24} strokeWidth={4} color="#6a6a6a" strokeLinecap="butt" />
        </button>
        <button aria-label="Отдалить" className="flex h-7 w-7 items-center justify-center rounded-sm bg-white shadow-[0_1px_3px_rgba(0,0,0,0.3)]">
          <Minus size={24} strokeWidth={4} color="#6a6a6a" strokeLinecap="butt" />
        </button>
      </div>
      <p className="absolute right-[7px] bottom-2 bg-white/70 font-['DejaVu_Sans',sans-serif] text-[11px] leading-4 text-black">
        © Яндекс{" "}
        <a href="#terms" className="underline">
          Условия использования
        </a>
      </p>
    </div>
    <div className="w-[15px]" />
  </section>
);

const Contacts = () => (
  <section className="relative bg-[#f6f6fb] pb-10">
    <div className="mx-auto flex max-w-[1460px] items-start px-5 pt-[50px]">
      <div className="-mt-[3px] w-[351px] text-[15px] leading-5 text-[#333]">
        <h2 className="text-[18px] leading-6 font-medium">Основной магазин</h2>
        <h3 className="mt-2 font-medium">Телефон</h3>
        <a href="tel:+74992585305" className="mt-0.5 block text-[18px] leading-6">
          +7 (499) 258 5305
        </a>
        <p className="mt-[3px] text-[#9fa1bf]">Пн-Пт 10:00-18:00 МСК</p>
        <h3 className="mt-[25px] font-medium">Электронная почта</h3>
        <a href="mailto:info@sinatech.ru" className="mt-0.5 block text-[18px] leading-6">
          info@sinatech.ru
        </a>
        <h3 className="mt-6 font-medium">Адрес магазина</h3>
        <a href="#map" className="mt-px flex items-center gap-2.5 text-[14px] text-[#478ef9]">
          <PinIcon className="h-3.5 w-2.5 text-[#f65454]" />
          <span className="border-b border-[#e0effc] leading-[18px]">ул. Золоторожский Вал, 32, стр. 6, Москва</span>
        </a>
      </div>

      <div className="-mt-[3px] flex-1 text-[15px] leading-5 text-[#333]">
        <h2 className="text-[18px] leading-6 font-medium">Наши реквизиты</h2>
        <p className="mt-2 w-[214px] text-[#9fa1bf]">Банковские и юридические реквизиты</p>
        <div className="mt-3.5 grid grid-cols-3">
          {requisites.map((column, i) => (
            <dl key={i} className="flex flex-col gap-[9px] pr-5">
              {column.map(([label, value]) => (
                <div key={label}>
                  <dt className="text-[14px] font-medium">{label}</dt>
                  <dd className="mt-0.5">{value}</dd>
                </div>
              ))}
            </dl>
          ))}
        </div>
      </div>

      <form className="w-[366px] shrink-0 rounded-md bg-white px-[25px] pt-6 pb-[45px] text-[#333]">
        <h2 className="text-[20px] leading-6 font-medium">Задать вопрос</h2>
        <label htmlFor="name" className="mt-[18px] block text-[14px] leading-5">
          Ваше имя
        </label>
        <input
          id="name"
          type="text"
          placeholder="Ваше имя"
          className="mt-2.5 block h-[46px] w-full rounded bg-[#f7f8fc] px-[17px] pb-0.5 text-[16px] outline-none placeholder:text-[#959595]"
        />
        <label htmlFor="email" className="mt-[17px] block text-[14px] leading-5">
          E-Mail адрес
        </label>
        <input
          id="email"
          type="email"
          placeholder="E-Mail адрес"
          className="mt-2.5 block h-[46px] w-full rounded bg-[#f7f8fc] px-[17px] pb-0.5 text-[16px] outline-none placeholder:text-[#959595]"
        />
        <label htmlFor="message" className="mt-[17px] block text-[14px] leading-5">
          Ваше сообщение
        </label>
        <textarea
          id="message"
          placeholder="Ваше сообщение"
          className="mt-[9px] block h-[94px] w-full rounded bg-[#f7f8fc] px-[17px] py-[11px] text-[16px] outline-none placeholder:text-[#959595]"
        />
        <button type="button" className="mt-5 h-[50px] w-full rounded bg-[#f94d05] text-[16px] font-bold text-white">
          Отправить
        </button>
      </form>
    </div>

    {/* messenger bubble, only its top edge shows */}
    <a href="#telegram" aria-label="Telegram" className="absolute top-9 right-[21px] h-4 w-[46px] overflow-hidden">
      <svg viewBox="0 0 46 46" className="h-[46px] w-[46px]">
        <circle cx="23" cy="23" r="23" fill="#0a8acf" />
        <path d="M9,24 L35,13 L31,34 L23,28Z" fill="#fff" />
      </svg>
    </a>
  </section>
);

const Footer = () => (
  <footer>
    <div className="bg-[#e9e9e9]">
      <div className="mx-auto max-w-[1460px] px-5 pt-[47px] pb-[46px]">
        <div className="-mr-14 grid grid-cols-6 text-[14px] text-[#333]">
          <div className="pt-0.5">
            <Logo className="h-[35px] w-[178px] overflow-visible" />
          </div>
          {footerColumns.map((column) => (
            <nav key={column.title}>
              <h3 className="text-[15px] leading-6 font-medium">{column.title}</h3>
              <ul className="mt-3.5 flex flex-col gap-2.5 leading-relaxed">
                {column.links.map((link) => (
                  <li key={link}>
                    <a href="#catalog">{link}</a>
                  </li>
                ))}
              </ul>
            </nav>
          ))}
          <div className="text-[15px] leading-6">
            <a href="tel:+74992585305" className="flex items-center gap-2 pt-0.5 font-medium">
              <MdPhone size={14} color="#000" />
              +7 (499) 258 5305
            </a>
            <a href="mailto:info@sinatech.ru" className="mt-[9px] flex items-center gap-2 font-medium">
              <MdEmail size={14} color="#000" />
              info@sinatech.ru
            </a>
            <p className="mt-2 flex items-center gap-2">
              <MdWatchLater size={14} color="#000" />
              Пн-Пт 10:00-18:00 МСК
            </p>
            <button className="mt-2.5 h-[50px] w-44 rounded bg-[#f94d05] text-[16px] font-bold text-white">
              Обратный звонок
            </button>
          </div>
        </div>
      </div>
    </div>
    <div className="bg-black">
      <div className="mx-auto flex h-[53px] max-w-[1460px] items-center justify-between px-5 text-[13px] text-[#c4c4c4]">
        <span>Интернет-магазин «SINATECH», 2025</span>
        <a href="#privacy">Политика конфиденциальности</a>
        <a href="#mp" className="flex items-center gap-1">
          <span className="mr-1.5">Разработано в</span>
          <PandaIcon />
          <span className="font-['Lato',sans-serif]">MP</span>
        </a>
      </div>
    </div>
  </footer>
);

const App = () => (
  <div className="bg-[#f6f6fb] font-['Roboto',sans-serif] text-[#333]">
    <Header />
    <div className="mx-auto max-w-[1460px] px-5 pt-11 pb-7">
      <h1 className="text-[25px] leading-8 font-medium">Связаться с нами</h1>
      <nav className="mt-1.5 flex gap-1.5 text-[14px] leading-5 text-[#c0c1d4]">
        <a href="#home">Главная</a>
        <span>/</span>
        <span>Связаться с нами</span>
      </nav>
    </div>
    <MapSection />
    <Contacts />
    <Footer />
  </div>
);

export default App;
